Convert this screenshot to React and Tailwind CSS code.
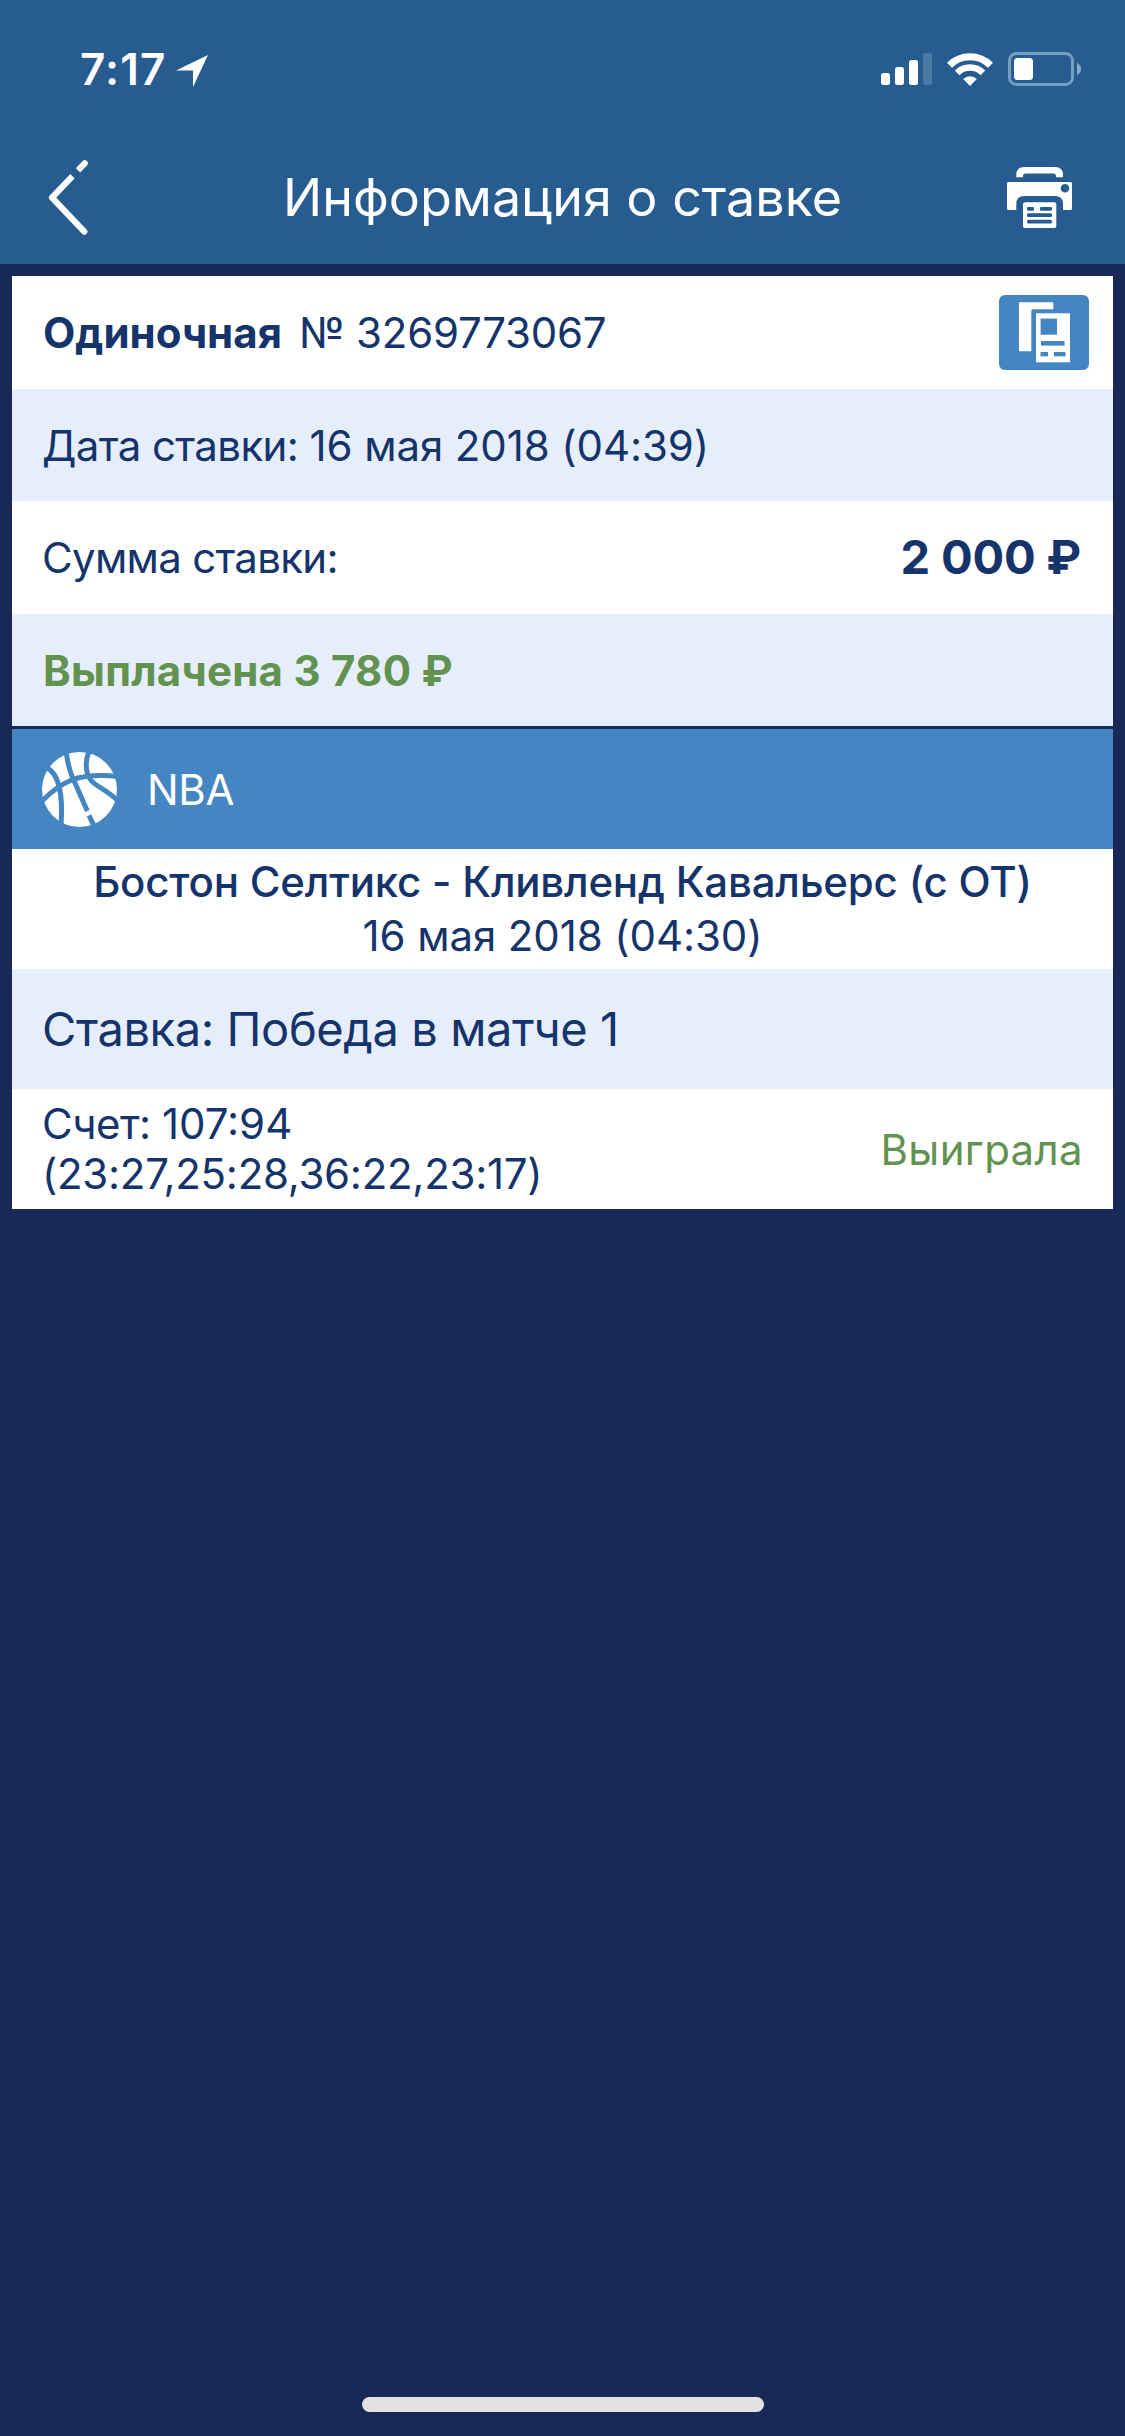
function LocationArrow() {
  return (
    <svg className="ml-[9px] h-8 w-8" viewBox="0 0 32 32" aria-hidden="true">
      <path d="M0 15.4 32 0 17 32V15.4Z" fill="white" />
    </svg>
  );
}

function SignalIcon() {
  return (
    <svg className="h-8 w-[51px]" viewBox="0 0 51 32" fill="white" aria-hidden="true">
      <rect x="0" y="20" width="9" height="12" rx="2.5" />
      <rect x="14" y="14" width="9" height="18" rx="2.5" />
      <rect x="28" y="7" width="9" height="25" rx="2.5" />
      <rect x="42" y="0" width="9" height="32" rx="2.5" fill="#4a7ba6" />
    </svg>
  );
}

function WifiIcon() {
  return (
    <svg className="ml-[15px] h-[33px] w-[46px]" viewBox="0 0 46 33" fill="none" stroke="white" aria-hidden="true">
      <path d="M2.5 12.2A29 29 0 0 1 43.5 12.2" strokeWidth="7" />
      <path d="M10.1 19.8A18.2 18.2 0 0 1 35.9 19.8" strokeWidth="6.6" />
      <path d="M16.2 26A9.6 9.6 0 0 1 29.8 26L23 33Z" fill="white" stroke="none" />
    </svg>
  );
}

function BatteryIcon() {
  return (
    <svg className="ml-[15px] h-[34px] w-[73px]" viewBox="0 0 73 34" aria-hidden="true">
      <rect x="1.5" y="1.5" width="63" height="31" rx="7" fill="none" stroke="#769fbf" strokeWidth="3" />
      <rect x="6" y="6" width="19" height="22" rx="3.5" fill="white" />
      <path d="M69 10.8Q73 13 73 17T69 23.2Z" fill="#86aac7" />
    </svg>
  );
}

function BackIcon() {
  return (
    <svg className="h-[76px] w-10" viewBox="0 0 40 76" fill="none" aria-hidden="true">
      <path d="M36.7 4.3 4 38.7 36.3 72.7" stroke="white" strokeWidth="6.2" strokeLinecap="round" strokeLinejoin="round" />
      <path d="M24.4 17.2 30.1 11.3" stroke="#265c90" strokeWidth="9" />
    </svg>
  );
}

function PrinterIcon() {
  return (
    <svg className="h-[61px] w-[65px]" viewBox="0 0 65 61" fill="white" aria-hidden="true">
      <path d="M9.3 10.3V8Q9.3 0 17.3 0H48Q56 0 56 8V10.3H49V9Q49 6.5 46.5 6.5H18.5Q16 6.5 16 9V10.3Z" />
      <path
        fillRule="evenodd"
        d="M1.5 15H63.5Q65 15 65 16.5V41.5Q65 43 63.5 43H56V37Q56 29 48 29H17.3Q9.3 29 9.3 37V43H1.5Q0 43 0 41.5V16.5Q0 15 1.5 15ZM58 17A4.3 4.3 0 1 0 58 25.6A4.3 4.3 0 1 0 58 17Z"
      />
      <rect x="16" y="35.2" width="33.3" height="25.8" rx="2" />
      <g fill="#265c90">
        <rect x="20" y="40" width="7" height="3.7" rx="1.3" />
        <rect x="33" y="40" width="12" height="3.7" rx="1.3" />
        <rect x="20" y="46.2" width="25" height="3.7" rx="1.5" />
        <rect x="20" y="52.8" width="25" height="3.7" rx="1.5" />
      </g>
    </svg>
  );
}

function CouponIcon() {
  return (
    <svg className="h-full w-full" viewBox="0 0 90 75" aria-hidden="true">
      <path d="M20 7.3H54.3V14.3H34Q32.3 14.3 32.3 16V56.3H20Z" fill="white" />
      <rect x="37" y="18.3" width="34" height="49" fill="white" />
      <g fill="#4486c1">
        <rect x="41.6" y="23.6" width="16.4" height="16.1" />
        <rect x="42" y="46" width="23.6" height="4.6" />
        <rect x="41.5" y="57" width="7.6" height="4.3" />
        <rect x="55" y="57" width="11.6" height="4.3" />
      </g>
    </svg>
  );
}

function BasketballIcon() {
  return (
    <svg className="h-[75px] w-[75px]" viewBox="126 96 225 225" fill="none" aria-hidden="true">
      <circle cx="238.5" cy="208.5" r="112.5" fill="white" />
      <g stroke="#4486c1" strokeWidth="15">
        <path d="M124 245Q170 198 215 180Q265 161 354 169" />
        <path d="M138 142C176 160 190 215 183 318" />
        <path d="M198 94Q206 150 222 182L262 273" />
        <path d="M267 286 283 320" />
        <path d="M268 92C255 120 256 155 270 177C285 200 320 208 354 243" />
      </g>
    </svg>
  );
}

export default function App() {
  return (
    <div className="flex h-[2436px] w-[1125px] flex-col bg-[#192957] font-['Inter','Liberation_Sans',sans-serif] text-[42px] text-[#14346b]">
      <header className="h-[264px] shrink-0 bg-[#265c90] text-white">
        <div className="flex h-[138px] items-center pr-11 pl-20">
          <span className="text-[44px] font-semibold tracking-[1.2px]">7:17</span>
          <div className="mt-1">
            <LocationArrow />
          </div>
          <div className="ml-auto flex items-center">
            <SignalIcon />
            <WifiIcon />
            <BatteryIcon />
          </div>
        </div>
        <div className="grid h-[120px] grid-cols-[120px_1fr_120px] items-center">
          <div className="pb-0.5 pl-12">
            <BackIcon />
          </div>
          <h1 className="text-center text-[52px] whitespace-nowrap">Информация о ставке</h1>
          <div className="flex justify-end pr-[53px] pb-px">
            <PrinterIcon />
          </div>
        </div>
      </header>

      <main className="mx-3 mt-3">
        <section>
          <div className="flex h-[113px] items-center bg-white pr-6 pl-[31px]">
            <span className="font-bold">Одиночная</span>
            <span className="ml-[17px] tracking-[-0.25px]">№ 3269773067</span>
            <button className="ml-auto h-[75px] w-[90px] rounded-md bg-[#4486c1]">
              <CouponIcon />
            </button>
          </div>
          <div className="flex h-28 items-center bg-[#e7eefb] pl-[30px]">
            <span className="tracking-[-0.1px]">
              <span className="tracking-[-0.6px]">Дата ставки: </span>16 мая 2018 (04:39)
            </span>
          </div>
          <div className="flex h-[113px] items-center justify-between bg-white pr-8 pl-[30px]">
            <span className="tracking-[-0.7px]">Сумма ставки:</span>
            <span className="text-[47px] font-bold tracking-[-0.2px]">2 000 ₽</span>
          </div>
          <div className="flex h-28 items-center bg-[#e7eefb] px-[31px] font-bold text-[#61924f]">
            <span className="tracking-[0.25px]">Выплачена 3 780 ₽</span>
          </div>
        </section>

        <section className="mt-[3px]">
          <div className="flex h-[120px] items-center gap-[30px] bg-[#4486c1] pl-[30px] text-white">
            <BasketballIcon />
            <span className="tracking-[-0.3px]">NBA</span>
          </div>
          <div className="flex h-[120px] flex-col items-center justify-center bg-white leading-[54px]">
            <span className="font-medium tracking-[-0.2px]">Бостон Селтикс - Кливленд Кавальерс (с ОТ)</span>
            <span className="tracking-[-0.1px]">16 мая 2018 (04:30)</span>
          </div>
          <div className="flex h-[120px] items-center bg-[#e7eefb] pl-[30px] text-[47px] tracking-[-0.4px]">
            Ставка: Победа в матче 1
          </div>
          <div className="flex h-[120px] items-center justify-between bg-white px-[30px]">
            <div className="flex flex-col leading-[50px]">
              <span>
                <span className="tracking-[-0.5px]">Счет: </span>107:94
              </span>
              <span className="tracking-[-0.28px]">(23:27,25:28,36:22,23:17)</span>
            </div>
            <span className="tracking-[0.35px] text-[#61924f]">Выиграла</span>
          </div>
        </section>
      </main>

      <div className="mx-auto mt-auto mb-6 h-[15px] w-[402px] rounded-full bg-[#e2e2e2]" />
    </div>
  );
}
